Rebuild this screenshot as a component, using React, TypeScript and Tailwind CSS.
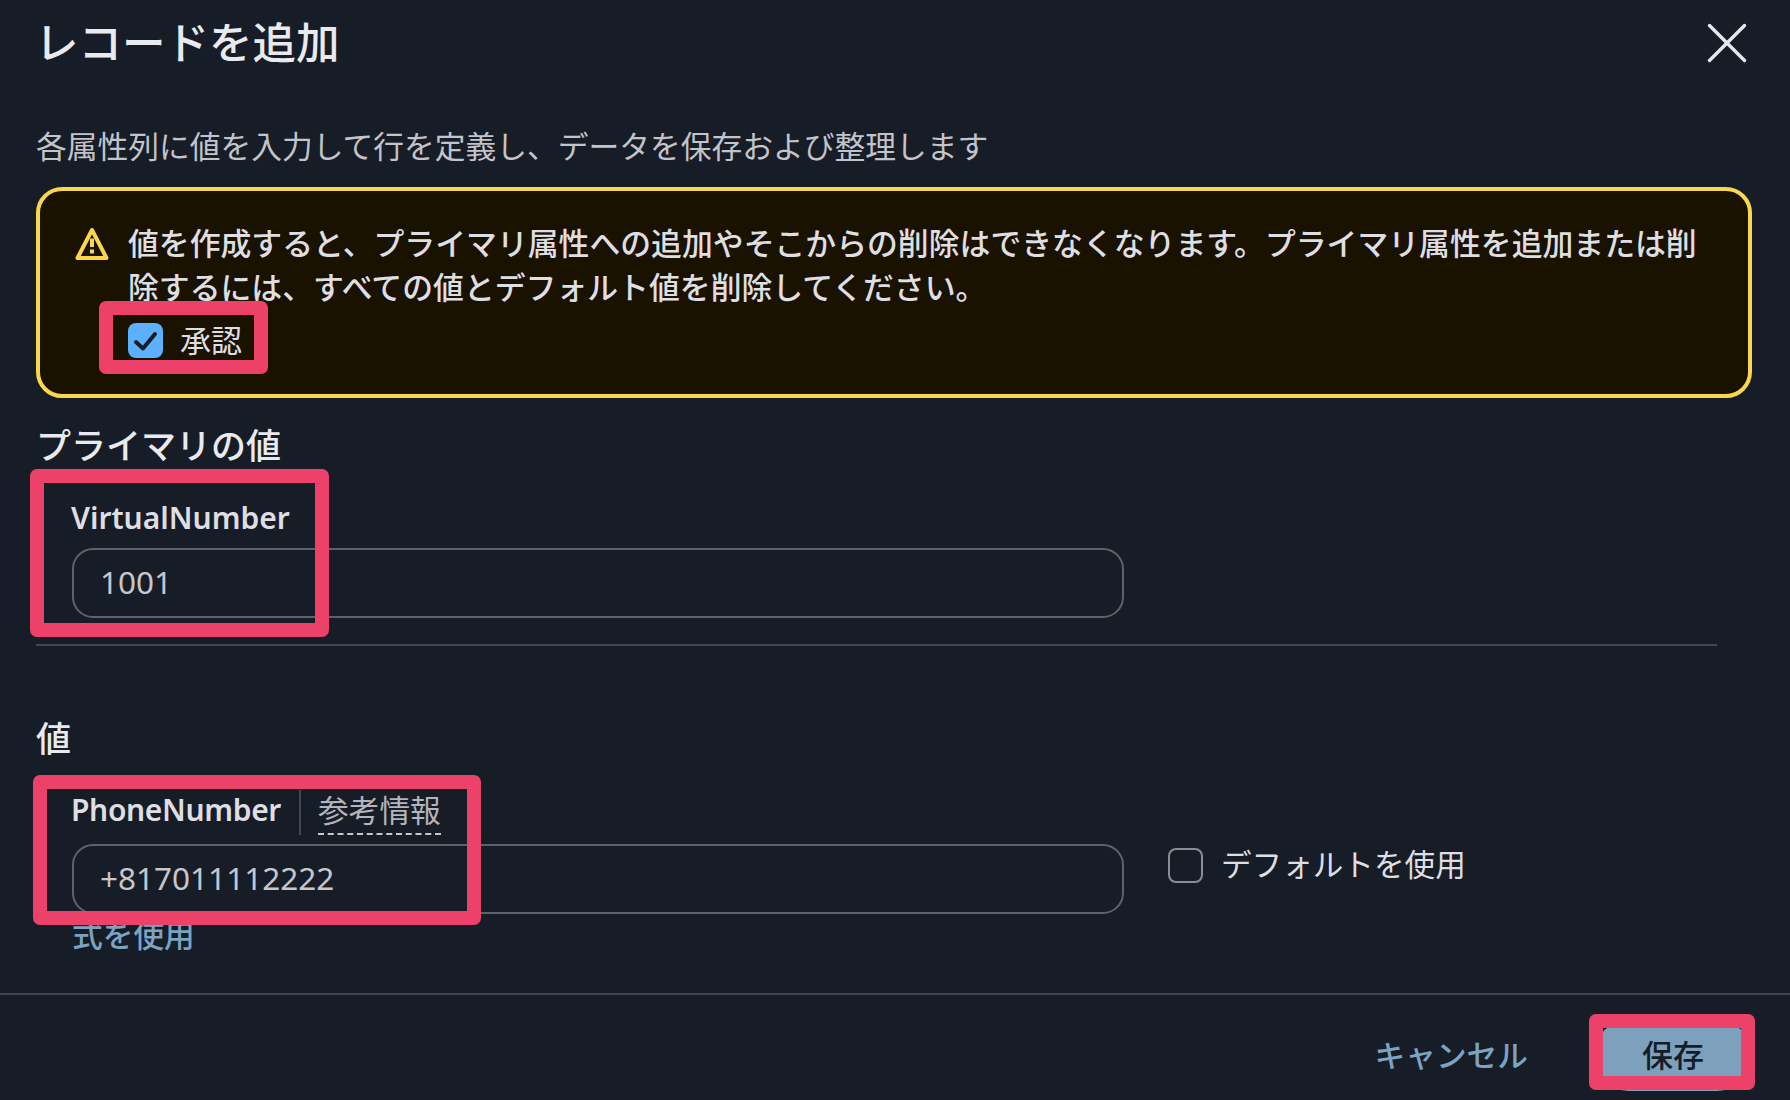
import { X } from 'lucide-react'

const font = "font-['Noto_Sans','Noto_Sans_CJK_JP',sans-serif]"

function Mark({ className }: { className: string }) {
  return <div className={`pointer-events-none absolute rounded-[7px] border-[#ec4169] ${className}`} />
}

function WarnIcon() {
  return (
    <svg viewBox="0 0 34 34" className="mt-[6px] h-[34px] w-[34px] shrink-0" fill="none" stroke="#f8d64e" strokeWidth="4" strokeLinejoin="round">
      <path d="M17 3 2.5 31h29z" />
      <path d="M17 11.5v8.5" />
      <path d="M17 22.5v4" />
    </svg>
  )
}

function ValueInput({ value }: { value: string }) {
  return (
    <div className="flex h-[70px] w-[1052px] items-center rounded-[21px] border-2 border-[#5f6369] pb-[2px] pl-[26px] text-[31.5px] text-[#c6c6cd]">
      {value}
    </div>
  )
}

export default function App() {
  return (
    <div className={`relative h-[1100px] w-[1790px] overflow-hidden bg-[#161d26] ${font}`}>
      <div className="flex h-[86px] items-center justify-between pl-[35px] pr-[28px]">
        <h1 className="text-[43.5px] leading-none font-medium text-[#eaeaee]">レコードを追加</h1>
        <X className="h-[70px] w-[70px] text-[#e8e8ec]" strokeWidth={1.15} />
      </div>

      <p className="mt-[40px] ml-[36px] text-[30.75px] leading-[40px] text-[#c3c3ca]">
        各属性列に値を入力して行を定義し、データを保存および整理します
      </p>

      <div className="mt-[21px] ml-[36px] flex h-[211px] w-[1716px] gap-[19px] rounded-[26px] border-4 border-[#f8d64e] bg-[#1a1200] pt-[30px] pl-[35px]">
        <WarnIcon />
        <div className="w-[1590px]">
          <p className="text-[30.85px] leading-[44px] font-medium text-[#dedee3]">
            値を作成すると、プライマリ属性への追加やそこからの削除はできなくなります。プライマリ属性を追加または削除するには、すべての値とデフォルト値を削除してください。
          </p>
          <div className="mt-[14px] flex items-center gap-[17px]">
            <div className="flex h-[35px] w-[35px] items-center justify-center rounded-[8px] bg-[#5cb1ff]">
              <svg viewBox="0 0 35 35" className="h-[35px] w-[35px]" fill="none" stroke="#161d26" strokeWidth="4" strokeLinecap="round" strokeLinejoin="round">
                <path d="M8 19l7 6.5L27 11" />
              </svg>
            </div>
            <span className="text-[31px] leading-[35px] text-[#dedee3]">承認</span>
          </div>
        </div>
      </div>

      <h2 className="mt-[28px] ml-[36px] h-[40px] text-[35px] leading-[40px] font-medium text-[#eaeaee]">プライマリの値</h2>

      <div className="mt-[32px] ml-[72px]">
        <div className="ml-[-1px] h-[40px] text-[30px] leading-[40px] font-semibold text-[#dedee3]">VirtualNumber</div>
        <div className="mt-[10px]">
          <ValueInput value="1001" />
        </div>
      </div>

      <div className="mt-[26px] ml-[36px] h-[2px] w-[1681px] bg-[#414750]" />

      <h2 className="mt-[73px] ml-[36px] h-[40px] text-[35px] leading-[40px] font-medium text-[#eaeaee]">値</h2>

      <div className="mt-[31px] ml-[71px] flex h-[46px]">
        <span className="text-[30px] leading-[40px] font-semibold tracking-[-0.35px] text-[#dedee3]">PhoneNumber</span>
        <div className="ml-[18px] h-[45px] w-[2px] bg-[#414750]" />
        <span className="ml-[17px] h-[45px] border-b-2 border-dashed border-[#c6c6cd] text-[30.7px] leading-[40px] text-[#b4b4bb]">参考情報</span>
      </div>

      <div className="mt-[8px] ml-[72px] flex items-start gap-[44px]">
        <ValueInput value="+817011112222" />
        <label className="mt-[4px] flex items-start gap-[18px]">
          <div className="h-[35px] w-[35px] rounded-[8px] border-2 border-[#8c8c94]" />
          <span className="text-[30.6px] leading-[33px] text-[#dedee3]">デフォルトを使用</span>
        </label>
      </div>

      <div className="mt-[1px] ml-[72px] h-[40px] text-[30.7px] leading-[40px] font-medium text-[#7ba3c2]">式を使用</div>

      <div className="mt-[38px] h-[2px] w-full bg-[#414750]" />

      <div className="flex items-center justify-end pt-[25px] pr-[38px]">
        <span className="text-[30.7px] font-medium text-[#7ba3c2]">キャンセル</span>
        <button className="ml-[66px] flex h-[71px] w-[158px] items-center justify-center rounded-[35px] bg-[#7da1bd] text-[31px] font-medium text-[#161d26]">
          保存
        </button>
      </div>

      <Mark className="top-[301px] left-[99px] h-[73px] w-[169px] border-[14px]" />
      <Mark className="top-[469px] left-[30px] h-[168px] w-[299px] border-[14px]" />
      <Mark className="top-[775px] left-[33px] h-[150px] w-[448px] border-[14px]" />
      <Mark className="top-[1014px] left-[1589px] h-[76px] w-[166px] border-[14px]" />
    </div>
  )
}
